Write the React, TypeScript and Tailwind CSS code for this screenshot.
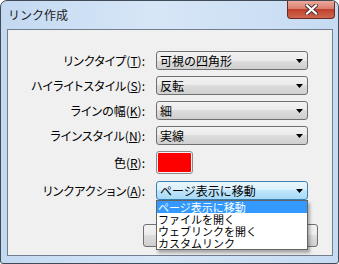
import React from 'react';

const FONT = "font-['Noto_Sans_CJK_JP','Noto_Sans',sans-serif]";

type Row = { label: string; key: string; value: string };

const ROWS: Row[] = [
  { label: 'リンクタイプ', key: 'T', value: '可視の四角形' },
  { label: 'ハイライトスタイル', key: 'S', value: '反転' },
  { label: 'ラインの幅', key: 'K', value: '細' },
  { label: 'ラインスタイル', key: 'N', value: '実線' },
];

const OPTIONS = ['ページ表示に移動', 'ファイルを開く', 'ウェブリンクを開く', 'カスタムリンク'];

function Label({ text, k }: { text: string; k: string }) {
  return (
    <div className="w-[137px] shrink-0 text-right text-[12px] leading-none text-black [font-feature-settings:'palt']">
      {text}(<span className="underline underline-offset-1">{k}</span>):
    </div>
  );
}

function Arrow() {
  return (
    <svg width="7" height="4" viewBox="0 0 7 4" className="shrink-0 mr-[4px]">
      <path d="M0 0h7L3.5 4z" fill="#000" />
    </svg>
  );
}

function Combo({ value, active }: { value: string; active?: boolean }) {
  return (
    <div
      className={`w-[152px] h-[19px] flex items-center justify-between rounded-[3px] border pl-[3px] ${
        active
          ? 'border-[#3c7fb1] bg-[linear-gradient(#eaf6fd,#d9f0fc_50%,#bee6fd_50%,#a7d9f5)]'
          : 'border-[#707070] bg-[linear-gradient(#f2f2f2,#ebebeb_50%,#dddddd_50%,#cfcfcf)]'
      }`}
    >
      <span className="text-[12px] leading-none text-black">{value}</span>
      <Arrow />
    </div>
  );
}

export default function App() {
  return (
    <div className={`w-[339px] h-[264px] bg-white ${FONT}`}>
      <div className="w-[339px] h-[264px] flex flex-col rounded-t-[7px] rounded-b-[3px] border border-[#404b57] bg-[linear-gradient(90deg,#c3d9f1,#d7e6f7_45%,#c6dbf2)] overflow-hidden">
        {/* title bar */}
        <div className="relative h-[28px] shrink-0 flex items-center pl-[7px]">
          <span className="text-[12px] leading-none text-[#1b1b1b]">リンク作成</span>
          <div className="absolute right-[3px] top-0 w-[48px] h-[18px] flex items-center justify-center rounded-b-[4px] border border-t-0 border-[#6a2a22] bg-[linear-gradient(#e9a99b,#d98070_45%,#c0402c_50%,#cf6850)]">
            <svg width="13" height="11" viewBox="0 0 13 11">
              <path d="M2 1.5l9 8M11 1.5l-9 8" stroke="#4a3030" strokeWidth="4" strokeLinecap="square" />
              <path d="M2 1.5l9 8M11 1.5l-9 8" stroke="#fff" strokeWidth="2.2" strokeLinecap="square" />
            </svg>
          </div>
        </div>

        {/* client area */}
        <div className="relative flex-1 ml-[6px] mr-[5px] mb-[7px] border border-[#6f7f90] bg-[#f0f0f0] flex flex-col pt-[21px]">
          <div className="flex flex-col gap-[6px]">
            {ROWS.map((r) => (
              <div key={r.key} className="flex items-center gap-[11px]">
                <Label text={r.label} k={r.key} />
                <Combo value={r.value} />
              </div>
            ))}
            <div className="flex items-center gap-[11px]">
              <Label text="色" k="R" />
              <div className="w-[37px] h-[23px] rounded-[3px] border border-[#8a8a8a] bg-[#f4f4f4] p-[1px]">
                <div className="w-full h-full bg-[#ff0000] rounded-[1px]" />
              </div>
            </div>
            <div className="flex items-center gap-[11px] mt-[1px]">
              <Label text="リンクアクション" k="A" />
              <Combo value="ページ表示に移動" active />
            </div>
          </div>

          {/* buttons */}
          <div className="flex justify-end gap-[25px] pr-[14px] mt-[24px]">
            <div className="w-[75px] h-[23px] rounded-[3px] border border-[#707070] bg-[linear-gradient(#f2f2f2,#ebebeb_50%,#dddddd_50%,#cfcfcf)]" />
            <div className="w-[75px] h-[23px] rounded-[3px] border border-[#707070] bg-[linear-gradient(#f2f2f2,#ebebeb_50%,#dddddd_50%,#cfcfcf)]" />
          </div>

          {/* open dropdown list */}
          <div className="absolute left-[148px] top-[170px] w-[152px] border border-[#646464] bg-white shadow-[2px_3px_3px_rgba(0,0,0,0.3)]">
            {OPTIONS.map((o, i) => (
              <div
                key={o}
                className={`h-[12px] flex items-center pl-[1px] text-[11px] leading-[12px] ${
                  i === 0 ? 'bg-[#3399ff] text-white' : 'text-black'
                }`}
              >
                {o}
              </div>
            ))}
          </div>
        </div>
      </div>
    </div>
  );
}
